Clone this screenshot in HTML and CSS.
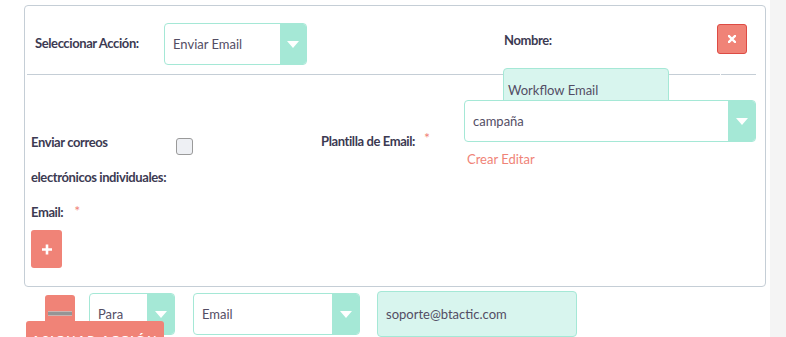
FILE: index.html
```html
<!DOCTYPE html>
<html lang="es">
<head>
<meta charset="utf-8">
<link rel="stylesheet" href="styles.css">
</head>
<body>
<div class="page">
  <div class="panel">
    <div class="top-row">
      <span class="label label-action">Seleccionar Acción:</span>
      <div class="select select-action">
        <span class="select-value">Enviar Email</span>
        <span class="select-arrow"><i class="tri"></i></span>
      </div>
      <span class="label label-name">Nombre:</span>
      <button class="btn-close" type="button" aria-label="Cerrar">
        <svg width="8" height="8" viewBox="0 0 8 8"><path d="M1 1L7 7M7 1L1 7" stroke="#fff" stroke-width="2.4" stroke-linecap="square"/></svg>
      </button>
    </div>
    <div class="divider"></div>
    <div class="input input-name">Workflow Email</div>
    <div class="fields">
      <div class="col-left">
        <div class="label label-individual">Enviar correos electrónicos individuales:</div>
        <div class="label label-email">Email:<span class="req">*</span></div>
        <button class="btn-add" type="button" aria-label="Añadir">
          <svg width="10" height="11" viewBox="0 0 10 11"><path d="M5 0.5V10.5M0 5.5H10" stroke="#fff" stroke-width="2.6"/></svg>
        </button>
      </div>
      <span class="checkbox"></span>
      <div class="label label-template">Plantilla de Email:<span class="req">*</span></div>
      <div class="col-right">
        <div class="select select-template">
          <span class="select-value">campaña</span>
          <span class="select-arrow"><i class="tri"></i></span>
        </div>
        <div class="links">Crear Editar</div>
      </div>
    </div>
  </div>
  <div class="bottom-row">
    <button class="btn-remove" type="button" aria-label="Quitar"><span class="minus"></span></button>
    <div class="select select-para">
      <span class="select-value">Para</span>
      <span class="select-arrow"><i class="tri"></i></span>
    </div>
    <div class="select select-type">
      <span class="select-value">Email</span>
      <span class="select-arrow"><i class="tri"></i></span>
    </div>
    <div class="input input-address">soporte@btactic.com</div>
    <button class="btn-assign" type="button">Asignar acción</button>
  </div>
</div>
</body>
</html>
```

FILE: styles.css
```css
* { box-sizing: border-box; }

html, body {
  margin: 0;
  padding: 0;
  background: #f4f4f4;
  font-family: Lato, "Open Sans", "Liberation Sans", sans-serif;
  color: #534d64;
}

.page {
  position: relative;
  width: 770px;
  height: 337px;
  overflow: hidden;
  background: #fff;
  padding-top: 5px;
}

.panel {
  margin-left: 24px;
  width: 742px;
  height: 282px;
  border: 1px solid #c5ced6;
  border-radius: 4px;
}

.label {
  font-size: 13px;
  font-weight: 700;
  letter-spacing: -0.4px;
  color: #3c3a52;
  line-height: 20px;
  white-space: nowrap;
}

.req {
  color: #f08377;
  font-weight: 400;
  font-size: 14px;
  line-height: 1;
  letter-spacing: 0;
  margin-left: 10px;
  vertical-align: 1px;
}

/* ---------- top row ---------- */
.top-row {
  display: flex;
  align-items: flex-start;
  height: 68px;
}

.label-action {
  margin: 27px 0 0 10px;
  width: 129px;
}

.select {
  display: flex;
  height: 42px;
  border: 1px solid #a5e8d6;
  border-radius: 4px;
  background: #fff;
  overflow: hidden;
}

.select-value {
  flex: 1;
  padding-left: 8px;
  font-size: 13px;
  line-height: 40px;
  color: #534d64;
  white-space: nowrap;
}

.select-arrow {
  width: 26px;
  background: #a5e8d6;
  display: flex;
  align-items: center;
  justify-content: center;
}

.tri {
  display: block;
  width: 0;
  height: 0;
  border-left: 6px solid transparent;
  border-right: 6px solid transparent;
  border-top: 7px solid #fff;
}

.select-action {
  margin-top: 17px;
  width: 143px;
}

.label-name {
  margin: 24px 0 0 197px;
}

.btn-close {
  margin: 18px 18px 0 auto;
  width: 30px;
  height: 30px;
  padding: 0;
  border: 1px solid #dd4b44;
  border-radius: 3px;
  background: #f08377;
  display: flex;
  align-items: center;
  justify-content: center;
}

.divider {
  height: 1px;
  margin: 0 9px 0 2px;
  background: linear-gradient(to right, #c5ced6 0 693px, transparent 693px 694px, #c5ced6 694px);
}

.input {
  height: 42px;
  border: 1px solid #a5e8d6;
  border-radius: 4px;
  background: #d8f5ee;
  font-size: 13px;
  line-height: 40px;
  color: #534d64;
  white-space: nowrap;
}

.input-name {
  margin: -7px 0 0 478px;
  width: 166px;
  padding-left: 4px;
  line-height: 42px;
}

/* ---------- fields ---------- */
.fields {
  display: flex;
  align-items: flex-start;
  margin-top: -10px;
}

.col-left {
  margin-left: 6px;
  width: 145px;
  padding-top: 25px;
}

.col-left .label {
  line-height: 35px;
}

.label-individual {
  white-space: normal;
  width: 138px;
}

.label-email {
  height: 35px;
}

.label-email .req {
  margin-left: 11px;
}

.btn-add {
  display: flex;
  align-items: center;
  justify-content: center;
  margin-top: 0;
  width: 31px;
  height: 38px;
  padding: 0;
  border: none;
  border-radius: 3px;
  background: #f08377;
}

.checkbox {
  margin-top: 38px;
  width: 17px;
  height: 17px;
  border: 1px solid #9a9a9a;
  border-radius: 3px;
  background: #eef0f4;
}

.label-template {
  margin: 0 0 0 128px;
  padding-top: 24px;
  line-height: 35px;
}

.label-template .req {
  margin-left: 9px;
  vertical-align: 3px;
}

.col-right {
  margin: 0 9px 0 auto;
  width: 292px;
}

.select-template .select-arrow {
  width: 27px;
}

.links {
  margin-top: 7px;
  padding-left: 3px;
  font-size: 13px;
  line-height: 20px;
  color: #f08377;
}

/* ---------- bottom row ---------- */
.bottom-row {
  display: flex;
  align-items: flex-start;
  margin-top: 4px;
}

.btn-remove {
  margin: 4px 0 0 45px;
  width: 30px;
  height: 40px;
  padding: 16px 0 0;
  border: none;
  border-radius: 3px;
  background: #f08377;
  display: flex;
  justify-content: center;
  align-items: flex-start;
}

.minus {
  display: block;
  width: 24px;
  height: 5px;
  background: #959595;
  border-top: 1px solid #c9b5b2;
  border-bottom: 1px solid #c9b5b2;
}

.select-para {
  margin: 2px 0 0 14px;
  width: 86px;
}

.select-para .select-arrow,
.select-type .select-arrow {
  width: 27px;
}

.select-type {
  margin: 2px 0 0 18px;
  width: 167px;
}

.input-address {
  margin-left: 17px;
  width: 200px;
  height: 46px;
  line-height: 44px;
  padding-left: 8px;
}

.btn-assign {
  position: absolute;
  left: 26px;
  top: 321px;
  width: 138px;
  padding: 11px 0 9px;
  border: none;
  border-radius: 3px 3px 0 0;
  background: #f08377;
  color: #fff;
  font-family: Lato, "Open Sans", sans-serif;
  font-size: 12px;
  font-weight: 700;
  letter-spacing: 1.8px;
  text-transform: uppercase;
  text-align: center;
  line-height: 16px;
  display: block;
}
```
